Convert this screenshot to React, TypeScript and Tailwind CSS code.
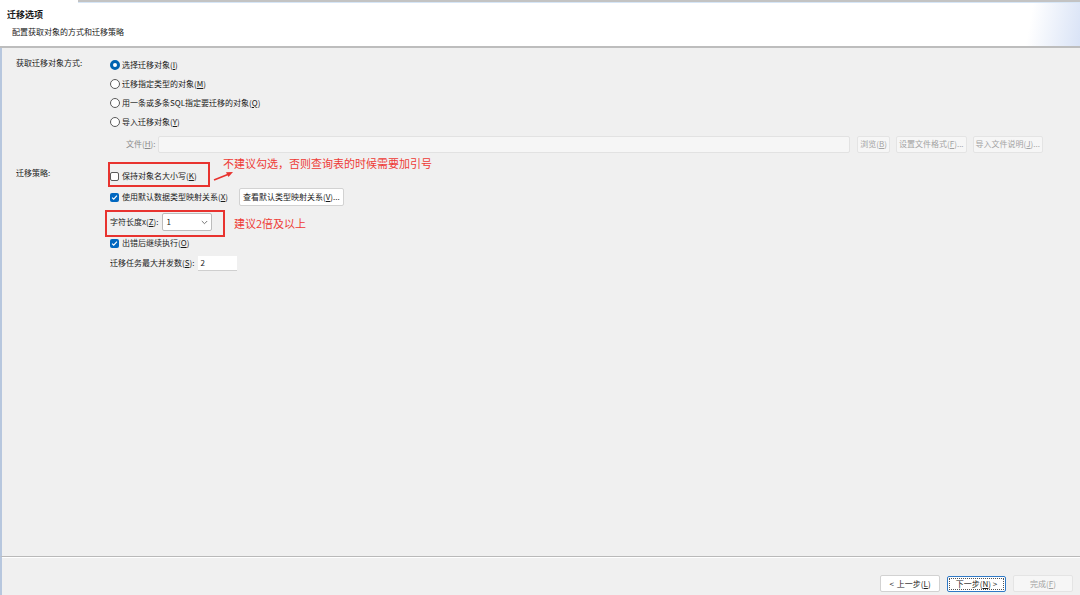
import React from "react";

const FONT = "font-['Noto_Sans_CJK_SC','Noto_Sans',sans-serif]";

function Mn({ label, k, tail = "" }: { label: string; k: string; tail?: string }) {
  return (
    <span className="whitespace-nowrap">
      {label}(<span className="underline">{k}</span>){tail}
    </span>
  );
}

function Radio({ on }: { on?: boolean }) {
  return on ? (
    <span className="w-[10px] h-[10px] rounded-full border-[3px] border-[#0063b1] bg-white shrink-0" />
  ) : (
    <span className="w-[10px] h-[10px] rounded-full border border-[#5a5a5a] bg-white shrink-0" />
  );
}

function Check({ on }: { on?: boolean }) {
  if (!on) return <span className="w-[9px] h-[9px] rounded-[2px] border border-[#5a5a5a] bg-white shrink-0" />;
  return (
    <span className="w-[9px] h-[9px] rounded-[2px] bg-[#0067c0] shrink-0 grid place-items-center">
      <svg width="7" height="7" viewBox="0 0 8 8">
        <path d="M1.2 4.2 L3.1 6 L6.8 1.8" fill="none" stroke="#fff" strokeWidth="1.3" />
      </svg>
    </span>
  );
}

function Btn({ children, disabled, className = "" }: { children: React.ReactNode; disabled?: boolean; className?: string }) {
  return (
    <div
      className={
        "h-[17px] flex items-center rounded-[2px] border whitespace-nowrap shrink-0 " +
        (disabled ? "bg-[#f6f6f6] border-[#e4e4e4] text-[#a3a3a3] " : "bg-white border-[#d2d2d2] text-[#1b1b1b] ") +
        className
      }
    >
      {children}
    </div>
  );
}

export default function App() {
  return (
    <div className={`${FONT} relative w-[1080px] h-[595px] bg-[#f0f0f0] text-[8px] text-[#1b1b1b] flex flex-col overflow-hidden`}>
      {/* header */}
      <div className="flex h-[3px]">
        <div className="w-[78px] bg-white" />
        <div className="flex-1 border-t-2 border-[#c3c3c3] bg-[#d6e6f7]" />
      </div>
      <div className="h-[45px] bg-[linear-gradient(100deg,#ffffff_95%,#d9e3f6)] border-b-2 border-[#bdbdbd] px-[7px] pt-[6px]">
        <div className="text-[9px] font-bold leading-[12px]">迁移选项</div>
        <div className="pl-[5px] mt-[5px] leading-[12px]">配置获取对象的方式和迁移策略</div>
      </div>

      {/* body */}
      <div className="flex-1 border-l-2 border-[#b7c7de] pl-[14px] pt-[7px]">
        <div className="grid grid-cols-[94px_1fr]">
          <div className="leading-[12px] pt-[2px]">获取迁移对象方式:</div>
          <div>
            <div className="h-[19px] flex items-center gap-[2px]"><Radio on /><Mn label="选择迁移对象" k="I" /></div>
            <div className="h-[19px] flex items-center gap-[2px]"><Radio /><Mn label="迁移指定类型的对象" k="M" /></div>
            <div className="h-[19px] flex items-center gap-[2px]"><Radio /><Mn label="用一条或多条SQL指定要迁移的对象" k="Q" /></div>
            <div className="h-[19px] flex items-center gap-[2px]"><Radio /><Mn label="导入迁移对象" k="Y" /></div>
            <div className="mt-[4px] mr-[37px] h-[18px] flex items-center text-[#8a8a8a]">
              <span className="ml-[16px] mr-[2px] shrink-0 whitespace-nowrap"><Mn label="文件" k="H" />:</span>
              <div className="flex-1 h-[17px] bg-[#f6f6f6] border border-[#e2e2e2] rounded-[2px]" />
              <Btn disabled className="ml-[7px] px-[2px]"><Mn label="浏览" k="B" /></Btn>
              <Btn disabled className="ml-[6px] px-[2px]"><Mn label="设置文件格式" k="F" tail="..." /></Btn>
              <Btn disabled className="ml-[6px] px-[2px]"><Mn label="导入文件说明" k="J" tail="..." /></Btn>
            </div>
          </div>
        </div>

        <div className="grid grid-cols-[94px_1fr] mt-[13px]">
          <div className="leading-[12px] pt-[1px]">迁移策略:</div>
          <div>
            <div className="h-[20px] flex items-center gap-[3px]"><Check /><Mn label="保持对象名大小写" k="K" /></div>
            <div className="h-[22px] flex items-center gap-[3px]">
              <Check on /><Mn label="使用默认数据类型映射关系" k="X" />
              <Btn className="ml-[8px] h-[18px] px-[3px]"><Mn label="查看默认类型映射关系" k="V" tail="..." /></Btn>
            </div>
            <div className="mt-[3px] h-[22px] flex items-center">
              <span className="whitespace-nowrap"><Mn label="字符长度x" k="Z" />:</span>
              <div className="ml-[4px] w-[50px] h-[18px] bg-white border border-[#bcbcbc] rounded-[2px] flex items-center justify-between px-[3px]">
                <span>1</span>
                <svg width="7" height="5" viewBox="0 0 7 5"><path d="M0.8 1 L3.5 3.7 L6.2 1" fill="none" stroke="#666" strokeWidth="0.9" /></svg>
              </div>
            </div>
            <div className="h-[20px] flex items-center gap-[3px]"><Check on /><Mn label="出错后继续执行" k="O" /></div>
            <div className="h-[20px] flex items-center">
              <span className="whitespace-nowrap"><Mn label="迁移任务最大并发数" k="S" />:</span>
              <div className="ml-[4px] w-[39px] h-[15px] bg-white border-b border-[#cfcfcf] flex items-center px-[2px]">2</div>
            </div>
          </div>
        </div>
      </div>

      {/* footer */}
      <div className="h-[39px] border-t border-[#b9b9b9] border-l-2 border-l-[#b7c7de] shadow-[inset_0_1px_0_#fff] flex items-center justify-end gap-[7px] pr-[7px] pt-[15px]">
        <Btn className="w-[60px] justify-center h-[16px]">&lt; <span className="ml-[3px]"><Mn label="上一步" k="L" /></span></Btn>
        <div className="w-[59px] h-[16px] border border-[#2f79c6] rounded-[2px] bg-white p-[1px]">
          <div className="w-full h-full border border-dotted border-[#555] flex items-center justify-center">
            <Mn label="下一步" k="N" tail=" >" />
          </div>
        </div>
        <Btn disabled className="w-[60px] justify-center h-[16px]"><Mn label="完成" k="F" /></Btn>
      </div>

      {/* annotations */}
      <div className="absolute left-[108px] top-[162px] w-[102px] h-[25px] border-2 border-[#e8332f]" />
      <div className="absolute left-[105px] top-[210px] w-[120px] h-[27px] border-2 border-[#e8332f]" />
      <svg className="absolute left-[212px] top-[168px]" width="24" height="14" viewBox="0 0 24 14">
        <path d="M2 12 L17 6" stroke="#e8332f" strokeWidth="1.6" />
        <path d="M21 4 L14 4.2 L16.5 9 Z" fill="#e8332f" />
      </svg>
      <div className="absolute left-[223px] top-[155px] text-[11px] leading-[16px] text-[#ee3b36]">不建议勾选，否则查询表的时候需要加引号</div>
      <div className="absolute left-[234px] top-[215px] text-[11px] leading-[16px] text-[#ee3b36]">建议2倍及以上</div>
    </div>
  );
}
